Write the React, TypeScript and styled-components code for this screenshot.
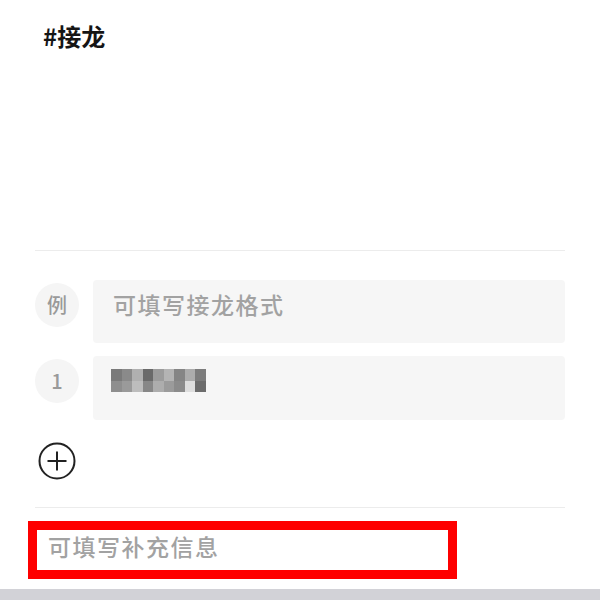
import styled, { createGlobalStyle } from 'styled-components';

const GlobalStyle = createGlobalStyle`
  html, body {
    margin: 0;
    padding: 0;
    background: #ffffff;
  }
  body {
    font-family: "Noto Sans CJK SC", "Noto Sans", sans-serif;
  }
`;

const Page = styled.div`
  width: 600px;
  height: 600px;
  display: flex;
  flex-direction: column;
  overflow: hidden;
  background: #ffffff;
`;

const Body = styled.div`
  padding: 0 35px;
  flex: 1;
  display: flex;
  flex-direction: column;
`;

const TitleArea = styled.div`
  height: 251px;
  padding-top: 21px;
  box-sizing: border-box;
  border-bottom: 1px solid #ececec;
`;

const Title = styled.h1`
  margin: 0 0 0 8px;
  font-size: 24px;
  line-height: 30px;
  font-weight: 700;
  color: #151515;
`;

const List = styled.div`
  display: flex;
  flex-direction: column;
  gap: 13px;
  padding-top: 29px;
`;

const Row = styled.div`
  display: flex;
  align-items: flex-start;
  gap: 14px;
`;

const Badge = styled.div`
  width: 44px;
  height: 44px;
  flex: none;
  margin-top: 3px;
  border-radius: 50%;
  background: #f5f5f5;
  color: #9a9a9a;
  font-size: 20px;
  font-weight: 500;
  line-height: 1;
  display: flex;
  align-items: center;
  justify-content: center;
`;

const Field = styled.div<{ $tall?: boolean }>`
  flex: 1;
  height: ${(p) => (p.$tall ? 64 : 63)}px;
  background: #f6f6f6;
  border-radius: 4px;
  display: flex;
  align-items: flex-start;
  padding: 13px 18px 0 20px;
  box-sizing: border-box;
  font-size: 23px;
  font-weight: 500;
  line-height: 1;
  letter-spacing: 1.5px;
  color: #a2a2a2;
`;

const Mosaic = styled.div`
  display: grid;
  grid-template-columns: repeat(9, 10.5px);
  grid-auto-rows: 11.5px;
  margin-left: -2px;
`;

const Cell = styled.span<{ $shade: string }>`
  background: ${(p) => p.$shade};
`;

const AddButton = styled.button`
  margin: 22px 0 0 3px;
  width: 38px;
  height: 38px;
  padding: 0;
  border: none;
  background: none;
  display: flex;
  cursor: pointer;
`;

const Divider = styled.div`
  height: 1px;
  background: #ececec;
  margin-top: 27px;
`;

const Supplement = styled.div`
  margin: 13px 0 0 -7px;
  width: 429px;
  height: 58px;
  border: 9px solid #fe0000;
  box-sizing: border-box;
  display: flex;
  align-items: flex-start;
  padding: 5px 0 0 11px;
  font-size: 23px;
  font-weight: 500;
  line-height: 1;
  letter-spacing: 1.5px;
  color: #a2a2a2;
`;

const BottomBar = styled.div`
  height: 11px;
  background: #d2d2d7;
  flex: none;
`;

const shades = [
  '#7a7a7a', '#8a8a8a', '#b0b0b0', '#6a6a6a', '#9c9c9c', '#b4b4b4', '#858585', '#acacac', '#7c7c7c',
  '#8e8e8e', '#9a9a9a', '#bdbdbd', '#878787', '#adadad', '#9b9b9b', '#8b8b8b', '#dedede', '#6c6c6c',
];

function PlusIcon() {
  return (
    <svg width="38" height="38" viewBox="0 0 38 38" fill="none" stroke="#222" strokeWidth="2">
      <circle cx="19" cy="19" r="17.5" />
      <path d="M19 9.5v19M9.5 19h19" />
    </svg>
  );
}

export default function App() {
  return (
    <>
      <GlobalStyle />
      <Page>
        <Body>
          <TitleArea>
            <Title>#接龙</Title>
          </TitleArea>
          <List>
            <Row>
              <Badge>例</Badge>
              <Field>可填写接龙格式</Field>
            </Row>
            <Row>
              <Badge>1</Badge>
              <Field $tall>
                <Mosaic>
                  {shades.map((s, i) => (
                    <Cell key={i} $shade={s} />
                  ))}
                </Mosaic>
              </Field>
            </Row>
          </List>
          <AddButton aria-label="添加">
            <PlusIcon />
          </AddButton>
          <Divider />
          <Supplement>可填写补充信息</Supplement>
        </Body>
        <BottomBar />
      </Page>
    </>
  );
}
